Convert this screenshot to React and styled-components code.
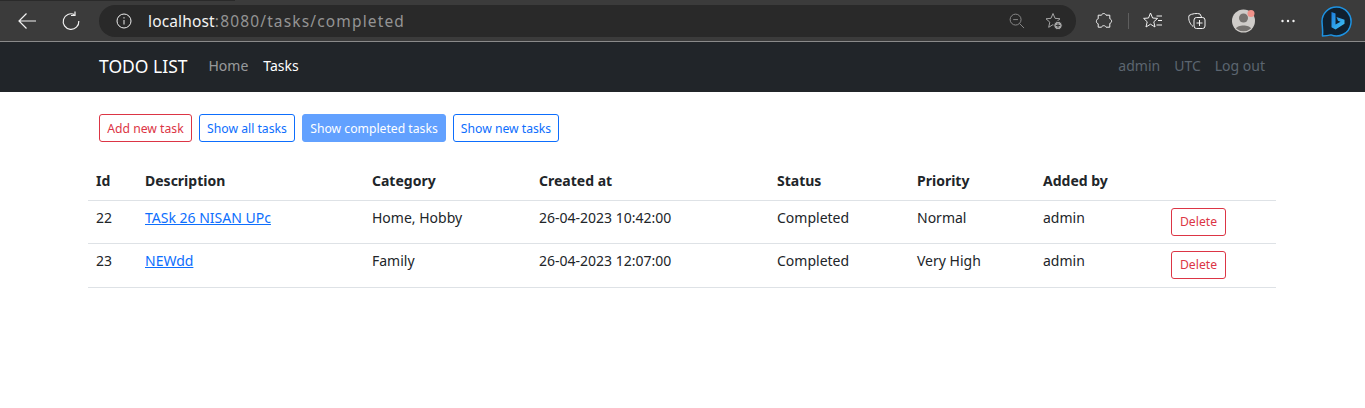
import React from 'react'
import styled, { createGlobalStyle } from 'styled-components'

const GlobalStyle = createGlobalStyle`
  html, body {
    margin: 0;
    padding: 0;
    background: #fff;
    font-family: 'Noto Sans', 'Open Sans', sans-serif;
    color: #212529;
  }
`

const Page = styled.div`
  width: 1365px;
  height: 408px;
  overflow: hidden;
  background: #fff;
`

const BrowserBar = styled.div`
  height: 41px;
  background: linear-gradient(#2a2a2a, #2a2a2a) 0 0 / 235px 1px no-repeat, #3b3b3b;
  border-bottom: 1px solid #8a8a8a;
  display: flex;
  align-items: center;
  box-sizing: content-box;
  padding-left: 15px;
`

const ChromeButton = styled.div`
  width: ${p => p.$w || 24}px;
  height: 24px;
  margin-left: ${p => p.$ml || 0}px;
  flex: none;
  display: flex;
  align-items: center;
  justify-content: center;
  color: #f2f2f2;
  svg { display: block; flex: none; }
`

const UrlPill = styled.div`
  width: 977px;
  height: 32px;
  margin-left: 16px;
  background: #292929;
  border-radius: 16px;
  display: flex;
  align-items: center;
  padding: 0 13px 0 17px;
  box-sizing: border-box;
  flex: none;
`

const UrlText = styled.div`
  margin-left: 16px;
  flex: 1;
  font-size: 15.5px;
  letter-spacing: 1.15px;
  color: #949494;
  b { font-weight: 400; color: #f4f4f4; letter-spacing: 0.15px; }
`

const Separator = styled.div`
  width: 1px;
  height: 16px;
  background: #5e5e5e;
  margin-left: 12px;
  flex: none;
`

const Navbar = styled.nav`
  height: 50px;
  background: #212529;
  display: flex;
  align-items: center;
  padding: 0 100px 3px 99px;
  box-sizing: border-box;
`

const Brand = styled.div`
  font-size: 17.5px;
  color: #fff;
  margin-right: 21px;
`

const NavLink = styled.a`
  font-size: 14px;
  color: ${p => (p.$active ? '#fff' : 'rgba(255,255,255,.55)')};
  margin-right: 15px;
  padding-bottom: 1px;
`

const NavRight = styled.div`
  margin-left: auto;
  display: flex;
`

const UserLink = styled.a`
  font-size: 14px;
  color: #5c6570;
  margin-left: 14px;
  padding-bottom: 1px;
`

const Content = styled.main`
  padding: 22px 89px 0 88px;
`

const ButtonRow = styled.div`
  display: flex;
  gap: 7px;
  padding-left: 11px;
  margin-bottom: 20px;
`

const ActionButton = styled.a`
  height: 28px;
  width: ${p => p.$w}px;
  box-sizing: border-box;
  display: flex;
  align-items: center;
  justify-content: center;
  font-size: 12.2px;
  border-radius: 3px;
  border: 1px solid ${p => (p.$filled ? '#62a1ff' : p.$danger ? '#dc3545' : '#0d6efd')};
  background: ${p => (p.$filled ? '#62a1ff' : '#fff')};
  color: ${p => (p.$filled ? '#fff' : p.$danger ? '#dc3545' : '#0d6efd')};
`

const Table = styled.table`
  width: 1188px;
  border-collapse: collapse;
  table-layout: fixed;
  font-size: 14px;
  tbody tr:last-child td { height: 44px; }
`

const HeadCell = styled.th`
  text-align: left;
  font-weight: 700;
  padding: 1px 8px 2px;
  height: 38px;
  box-sizing: border-box;
  border-bottom: 1px solid #dee2e6;
`

const Cell = styled.td`
  padding: 7px 8px 0;
  vertical-align: top;
  line-height: 19px;
  height: 43px;
  box-sizing: border-box;
  border-bottom: 1px solid #dee2e6;
`

const TaskLink = styled.a`
  color: #0d6efd;
  text-decoration: underline;
`

const DeleteButton = styled.a`
  display: flex;
  align-items: center;
  justify-content: center;
  width: 55px;
  height: 28px;
  box-sizing: border-box;
  border: 1px solid #dc3545;
  border-radius: 3px;
  color: #dc3545;
  font-size: 12.2px;
`

const columns = [49, 227, 167, 238, 140, 126, 128, 113]
const headers = ['Id', 'Description', 'Category', 'Created at', 'Status', 'Priority', 'Added by', '']
const tasks = [
  { id: 22, title: 'TASk 26 NISAN UPc', category: 'Home, Hobby', created: '26-04-2023 10:42:00', status: 'Completed', priority: 'Normal', by: 'admin' },
  { id: 23, title: 'NEWdd', category: 'Family', created: '26-04-2023 12:07:00', status: 'Completed', priority: 'Very High', by: 'admin' },
]

const BingLogo = () => (
  <svg width="32" height="32" viewBox="0 0 32 32">
    <defs>
      <linearGradient id="bingB" x1="0" y1="0" x2="1" y2="1">
        <stop offset="0" stopColor="#1d7fe0" />
        <stop offset="1" stopColor="#3fc3f5" />
      </linearGradient>
    </defs>
    <path
      d="M16.500 2A14.500 14.500 0 1 1 11 29.900C8 30.800 5 31 2.500 31 L2.500 29.500 C3 27 2.300 22 2 16.500 A14.500 14.500 0 0 1 16.500 2Z"
      fill="#10202f"
      stroke="#1d92e2"
      strokeWidth="1.500"
      strokeLinejoin="round"
    />
    <path d="M11.500 7 L15.500 8.500 V19.500 L20.500 16.800 L18 15.700 L16.500 12 L24.500 14.800 V18.800 L15.500 24.500 L11.500 22.200Z" fill="url(#bingB)" />
  </svg>
)

const App = () => {
  return (
    <Page>
      <GlobalStyle />
      <BrowserBar>
        <ChromeButton>
          <svg width="20" height="20" viewBox="0 0 20 20" fill="none" stroke="currentColor" strokeWidth="1.2">
            <path d="M19 10H2M9.500 2.500 2 10l7.500 7.500" />
          </svg>
        </ChromeButton>
        <ChromeButton $ml={20}>
          <svg width="20" height="20" viewBox="0 0 20 20" fill="none" stroke="currentColor" strokeWidth="1.2">
            <path d="M13.500 3.600A7.800 7.800 0 1 0 17.800 10" />
            <path d="M14 0.500v4h-4" />
          </svg>
        </ChromeButton>
        <UrlPill>
          <svg width="16" height="16" viewBox="0 0 16 16" fill="none" stroke="#eee" strokeWidth="1">
            <circle cx="8" cy="8" r="7" />
            <path d="M8 7v4.500M8 4.200v1.300" />
          </svg>
          <UrlText><b>localhost</b>:8080/tasks/completed</UrlText>
          <svg width="16" height="16" viewBox="0 0 17 17" fill="none" stroke="#8c8c8c" strokeWidth="1">
            <circle cx="7" cy="7" r="5.800" />
            <path d="M4.500 7h5M11.200 11.200 16 16" />
          </svg>
          <svg style={{ marginLeft: 20 }} width="18" height="18" viewBox="0 0 18 18" fill="none">
            <path d="M8 1.500 10 6.300 15 6.800 11.200 10.200 12.300 15.300 8 12.600 3.700 15.300 4.800 10.200 1 6.800 6 6.300Z" stroke="#a5a5a5" strokeLinejoin="round" />
            <circle cx="13" cy="13.500" r="4.200" fill="#a5a5a5" stroke="#292929" />
            <path d="M13 11.300v4.400M10.800 13.500h4.400" stroke="#333" />
          </svg>
        </UrlPill>
        <ChromeButton $ml={16}>
          <svg width="18" height="18" viewBox="0 0 18 18" fill="none" stroke="#f2f2f2" strokeWidth="1">
            <path d="M6.500 3.200C7 1 10.500 1 11 3.200h3.800v3.600c2.400.6 2.400 4 0 4.600v3.800H11c-.5-2-4-2-4.500 0H3.200v-3.400C.8 11.200.8 7.400 3.200 6.800V3.200z" />
          </svg>
        </ChromeButton>
        <Separator />
        <ChromeButton $ml={12}>
          <svg width="20" height="20" viewBox="0 0 20 20" fill="none" stroke="#f2f2f2" strokeWidth="1">
            <path d="M7.500 2 9.600 7l5 .4-3.800 3.400 1.200 5.200-4.500-2.800L3 16l1.200-5.200L.6 7.400l4.900-.4z" />
            <path d="M13.500 5H19M15 9.500h4M13.500 14H19" />
          </svg>
        </ChromeButton>
        <ChromeButton $ml={20}>
          <svg width="20" height="20" viewBox="0 0 20 20" fill="none" stroke="#f2f2f2" strokeWidth="1">
            <path d="M6 15.500C3 13 1 9 2 4.500 5 2.500 10 2 13 3l1.500 3" />
            <rect x="7" y="6.500" width="11" height="11" rx="2.500" />
            <path d="M12.500 9v6M9.500 12h6" />
          </svg>
        </ChromeButton>
        <ChromeButton $ml={23} $w={28}>
          <svg width="28" height="28" viewBox="0 0 28 28">
            <circle cx="11.500" cy="14" r="11.500" fill="#cfccc9" />
            <circle cx="11.500" cy="11" r="4.500" fill="#75726f" />
            <path d="M4 21.500c1.500-4 13.500-4 15 0a11.500 11.500 0 0 1-15 0z" fill="#75726f" />
            <circle cx="19" cy="6.500" r="3.500" fill="#f0928a" />
          </svg>
        </ChromeButton>
        <ChromeButton $ml={16}>
          <svg width="16" height="4" viewBox="0 0 16 4" fill="#f2f2f2">
            <circle cx="2.500" cy="2" r="1.200" /><circle cx="8" cy="2" r="1.200" /><circle cx="13.500" cy="2" r="1.200" />
          </svg>
        </ChromeButton>
        <ChromeButton $ml={20} $w={32}>
          <BingLogo />
        </ChromeButton>
      </BrowserBar>
      <Navbar>
        <Brand>TODO LIST</Brand>
        <NavLink>Home</NavLink>
        <NavLink $active>Tasks</NavLink>
        <NavRight>
          <UserLink>admin</UserLink>
          <UserLink>UTC</UserLink>
          <UserLink>Log out</UserLink>
        </NavRight>
      </Navbar>
      <Content>
        <ButtonRow>
          <ActionButton $danger $w={93}>Add new task</ActionButton>
          <ActionButton $w={96}>Show all tasks</ActionButton>
          <ActionButton $filled $w={144}>Show completed tasks</ActionButton>
          <ActionButton $w={106}>Show new tasks</ActionButton>
        </ButtonRow>
        <Table>
          <colgroup>
            {columns.map((w, i) => <col key={i} width={w} />)}
          </colgroup>
          <thead>
            <tr>
              {headers.map((h, i) => <HeadCell key={i}>{h}</HeadCell>)}
            </tr>
          </thead>
          <tbody>
            {tasks.map(t => (
              <tr key={t.id}>
                <Cell>{t.id}</Cell>
                <Cell><TaskLink>{t.title}</TaskLink></Cell>
                <Cell>{t.category}</Cell>
                <Cell>{t.created}</Cell>
                <Cell>{t.status}</Cell>
                <Cell>{t.priority}</Cell>
                <Cell>{t.by}</Cell>
                <Cell><DeleteButton>Delete</DeleteButton></Cell>
              </tr>
            ))}
          </tbody>
        </Table>
      </Content>
    </Page>
  )
}

export default App
